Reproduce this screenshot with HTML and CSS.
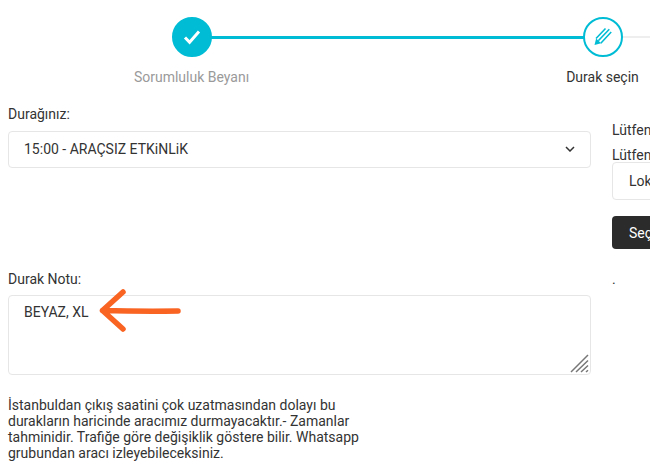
FILE: index.html
```html
<!DOCTYPE html>
<html lang="en">
<head>
  <meta charset="UTF-8" />
  <meta name="viewport" content="width=device-width, initial-scale=1.0"/>
  <title>Durak seçin</title>
  <link rel="stylesheet" href="styles.css">
</head>
<body>

  <div class="steps">
    <div class="step done">
      <div class="step-icon">
        <svg width="18" height="16" viewBox="0 0 18 16"><path d="M2 8.500l4.600 4.700L16 2.600" fill="none" stroke="#fff" stroke-width="3"/></svg>
      </div>
      <span class="step-label">Sorumluluk Beyanı</span>
    </div>
    <div class="step active">
      <div class="step-icon">
        <svg width="20" height="20" viewBox="0 0 20 20">
          <path d="M1.500 18l1.600-6.500 5 4.800z" fill="#00bcd4"/>
          <path d="M3 11.500L12.500 1.500M5.300 13.800L16.300 2.300M7.800 16.200L18.200 5" fill="none" stroke="#00bcd4" stroke-width="1.600"/>
        </svg>
      </div>
      <span class="step-label">Durak seçin</span>
    </div>
  </div>

  <div class="columns">
    <div class="main-col">
      <label class="field-label" for="durak">Durağınız:</label>
      <div class="select-box">
        <select id="durak" class="control">
          <option>15:00 - ARAÇSIZ ETKiNLiK</option>
        </select>
        <svg class="chevron" width="10" height="6" viewBox="0 0 10 6"><path d="M1 1l4 4 4-4" fill="none" stroke="#333" stroke-width="1.500"/></svg>
      </div>

      <label class="field-label note-label" for="not">Durak Notu:</label>
      <div class="note-box">
        <textarea id="not" class="control note">BEYAZ, XL</textarea>
        <svg class="grip" width="20" height="20" viewBox="0 0 20 20"><path d="M1 18L18 1M6 18L18 6.500M11 18l7-6.500M16 18l2-1.800" fill="none" stroke="#777" stroke-width="1.500"/></svg>
        <svg class="arrow" width="90" height="50" viewBox="0 0 90 50"><path d="M27 7L6.500 25.500L27 44M6.500 25.500Q44 26.500 82 26" fill="none" stroke="#f96423" stroke-width="5.500" stroke-linecap="round" stroke-linejoin="round"/></svg>
      </div>

      <p class="info">İstanbuldan çıkış saatini çok uzatmasından dolayı bu durakların haricinde aracımız durmayacaktır.- Zamanlar tahminidir. Trafiğe göre değişiklik göstere bilir. Whatsapp grubundan aracı izleyebileceksiniz.</p>
    </div>

    <div class="side-col">
      <div class="side-line">Lütfen lokasyon seçiniz</div>
      <div class="side-line">Lütfen seçiniz</div>
      <div class="side-select">Lokasyon</div>
      <button class="side-btn">Seçiniz</button>
      <div class="side-dot">.</div>
    </div>
  </div>

</body>
</html>
```

FILE: styles.css
```css
html, body {
  overflow: hidden;
}

body {
  font-family: Roboto, Arial, sans-serif;
  font-size: 14px;
  color: #333;
  background-color: #fff;
  margin: 0;
  height: 473px;
}

.steps {
  display: flex;
  width: 900px;
  margin-left: -14px;
  padding-top: 17px;
}

.step {
  position: relative;
  width: 411px;
  flex-shrink: 0;
  display: flex;
  flex-direction: column;
  align-items: center;
}

.step::after {
  content: "";
  position: absolute;
  top: 19px;
  left: 50%;
  width: 100%;
  height: 2px;
  background-color: #eee;
}

.step.done::after {
  height: 3px;
  background-color: #00bcd4;
}

.step-icon {
  position: relative;
  z-index: 1;
  box-sizing: border-box;
  width: 40px;
  height: 40px;
  border-radius: 50%;
  border: 2px solid #00bcd4;
  background: #fff;
  display: flex;
  align-items: center;
  justify-content: center;
}

.step.done .step-icon {
  background: #00bcd4;
}

.step-label {
  margin-top: 12px;
  line-height: 17px;
  white-space: nowrap;
}

.step.done .step-label {
  color: #9a9a9a;
}

.columns {
  display: flex;
  gap: 21px;
  width: 900px;
  margin-left: 8px;
  margin-top: 20px;
}

.main-col {
  width: 583px;
  flex-shrink: 0;
}

.field-label {
  display: block;
  line-height: 17px;
  margin-bottom: 8px;
}

.control {
  box-sizing: border-box;
  display: block;
  width: 100%;
  border: 1px solid #e6e6e6;
  border-radius: 4px;
  background: #fff;
  color: #333;
  font-family: Roboto, Arial, sans-serif;
  font-size: 14px;
  padding: 0 15px;
}

.select-box {
  position: relative;
}

.select-box select {
  height: 37px;
  appearance: none;
  padding-bottom: 1px;
}

.chevron {
  position: absolute;
  right: 16px;
  top: 15px;
}

.note-label {
  margin-top: 103px;
  margin-bottom: 7px;
}

.note-box {
  position: relative;
}

.note {
  height: 80px;
  padding: 8px 15px;
  line-height: 17px;
  resize: none;
  outline: none;
}

.grip {
  position: absolute;
  right: 1px;
  bottom: 1px;
}

.arrow {
  position: absolute;
  left: 88px;
  top: -10px;
}

.info {
  width: 365px;
  margin: 22px 0 0;
  line-height: 16px;
}

.side-col {
  width: 250px;
  flex-shrink: 0;
  padding-top: 16px;
}

.side-line {
  line-height: 17px;
  margin-bottom: 8px;
  white-space: nowrap;
}

.side-line + .side-line {
  margin-bottom: -2px;
}

.side-select {
  box-sizing: border-box;
  height: 38px;
  border: 1px solid #e6e6e6;
  border-radius: 4px;
  padding: 0 16px;
  line-height: 36px;
}

.side-btn {
  display: block;
  width: 100px;
  height: 33px;
  margin-top: 16px;
  border: none;
  border-radius: 4px;
  background-color: #2b2b2b;
  color: #fff;
  font-family: Roboto, Arial, sans-serif;
  font-size: 14px;
  text-align: left;
  padding: 0 17px;
}

.side-dot {
  margin-top: 22px;
  line-height: 17px;
}
```
